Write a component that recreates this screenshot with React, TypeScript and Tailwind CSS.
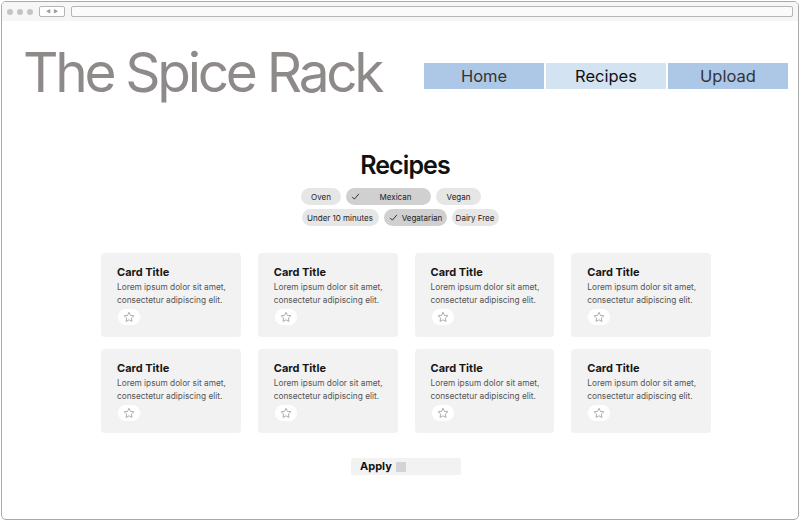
import React from "react";

const Star = () => (
  <svg width="12" height="12" viewBox="0 0 24 24" fill="none" stroke="#9a9a9a" strokeWidth="1.6" strokeLinejoin="round">
    <path d="M12 2.5l2.9 6.2 6.8.8-5 4.7 1.3 6.7L12 17.6l-6 3.3 1.3-6.7-5-4.7 6.8-.8z" />
  </svg>
);

const Check = () => (
  <svg width="9" height="9" viewBox="0 0 12 12" fill="none" stroke="#222" strokeWidth="1.2">
    <path d="M1.5 6.5l3 3 6-7" />
  </svg>
);

function Chip({ label, selected, w }: { label: string; selected?: boolean; w: string }) {
  return (
    <div
      className={`${w} h-[17px] rounded-full flex items-center text-[8px] text-[#222] ${
        selected ? "bg-[#d0d0d0]" : "bg-[#e6e6e6]"
      }`}
    >
      {selected ? (
        <>
          <span className="pl-[5px] flex items-center"><Check /></span>
          <span className="flex-1 text-center">{label}</span>
        </>
      ) : (
        <span className="flex-1 text-center">{label}</span>
      )}
    </div>
  );
}

function Card() {
  return (
    <div className="h-[84px] bg-[#f2f2f2] rounded-[4px] pl-[16px] pt-[12px]">
      <div className="text-[11px] font-bold text-[#161616] leading-[14px]">Card Title</div>
      <div className="text-[8.3px] text-[#555] leading-[13px] mt-[2px]">
        Lorem ipsum dolor sit amet,
        <br />
        consectetur adipiscing elit.
      </div>
      <div className="mt-[2px] ml-[1px] w-[22px] h-[16px] rounded-full bg-white flex items-center justify-center">
        <Star />
      </div>
    </div>
  );
}

export default function App() {
  return (
    <div className="w-[802px] h-[523px] bg-white p-[1px]" style={{ fontFamily: "Inter, 'Noto Sans', sans-serif" }}>
      <div className="w-[798px] h-[519px] border border-[#a9a9a9] rounded-[5px] overflow-hidden flex flex-col">
        {/* chrome */}
        <div className="h-[19px] bg-[#f6f6f6] flex items-center pl-[5px] pr-[5px] gap-[0px] shrink-0">
          <div className="flex gap-[4px] items-center">
            <div className="w-[6px] h-[6px] rounded-full bg-[#c4c4c4]" />
            <div className="w-[6px] h-[6px] rounded-full bg-[#c4c4c4]" />
            <div className="w-[6px] h-[6px] rounded-full bg-[#c4c4c4]" />
          </div>
          <div className="ml-[6px] w-[26px] h-[11px] border border-[#b5b5b5] rounded-[2px] flex items-center justify-center gap-[3px] text-[5px] text-[#999] bg-white">
            <span>◀</span>
            <span>▶</span>
          </div>
          <div className="ml-[6px] flex-1 h-[11px] border border-[#b5b5b5] rounded-[2px] bg-[#fafafa]" />
        </div>

        {/* header */}
        <div className="flex items-start pl-[21px] pt-[15px] shrink-0">
          <div className="w-[390px] text-[55px] leading-[72px] text-[#8f8a8a] tracking-[-3.3px] whitespace-nowrap">The Spice Rack</div>
          <div className="ml-auto mr-[10px] mt-[27px] flex gap-[2px]">
            <div className="w-[120px] h-[26px] bg-[#adc8e6] flex items-center justify-center text-[16.5px] text-[#333]">Home</div>
            <div className="w-[120px] h-[26px] bg-[#d4e3f2] flex items-center justify-center text-[16.5px] text-[#111]">Recipes</div>
            <div className="w-[120px] h-[26px] bg-[#adc8e6] flex items-center justify-center text-[16.5px] text-[#333]">Upload</div>
          </div>
        </div>

        {/* recipes heading */}
        <div className="mt-[42px] pl-[10px] text-center text-[25px] font-semibold text-[#111] leading-[30px] tracking-[-0.9px]">Recipes</div>

        {/* chips */}
        <div className="mt-[8px] flex flex-col items-center gap-[4px]">
          <div className="flex gap-[5px] ml-[-18px]">
            <Chip label="Oven" w="w-[40px]" />
            <Chip label="Mexican" w="w-[85px]" selected />
            <Chip label="Vegan" w="w-[45px]" />
          </div>
          <div className="flex gap-[5px]">
            <Chip label="Under 10 minutes" w="w-[77px]" />
            <Chip label="Vegatarian" w="w-[63px]" selected />
            <Chip label="Dairy Free" w="w-[47px]" />
          </div>
        </div>

        {/* cards */}
        <div className="mt-[27px] mx-auto grid grid-cols-4 gap-x-[17px] gap-y-[12px] w-[610px] translate-x-[6px]">
          {Array.from({ length: 8 }).map((_, i) => (
            <Card key={i} />
          ))}
        </div>

        {/* apply */}
        <div className="mt-[25px] mx-auto w-[110px] h-[17px] bg-[#f2f2f2] rounded-[2px] flex items-center pl-[9px] gap-[4px] translate-x-[6px]">
          <span className="text-[11px] font-bold text-[#111]">Apply</span>
          <span className="w-[10px] h-[10px] bg-[#d3d3d3] rounded-[1px]" />
        </div>
      </div>
    </div>
  );
}
